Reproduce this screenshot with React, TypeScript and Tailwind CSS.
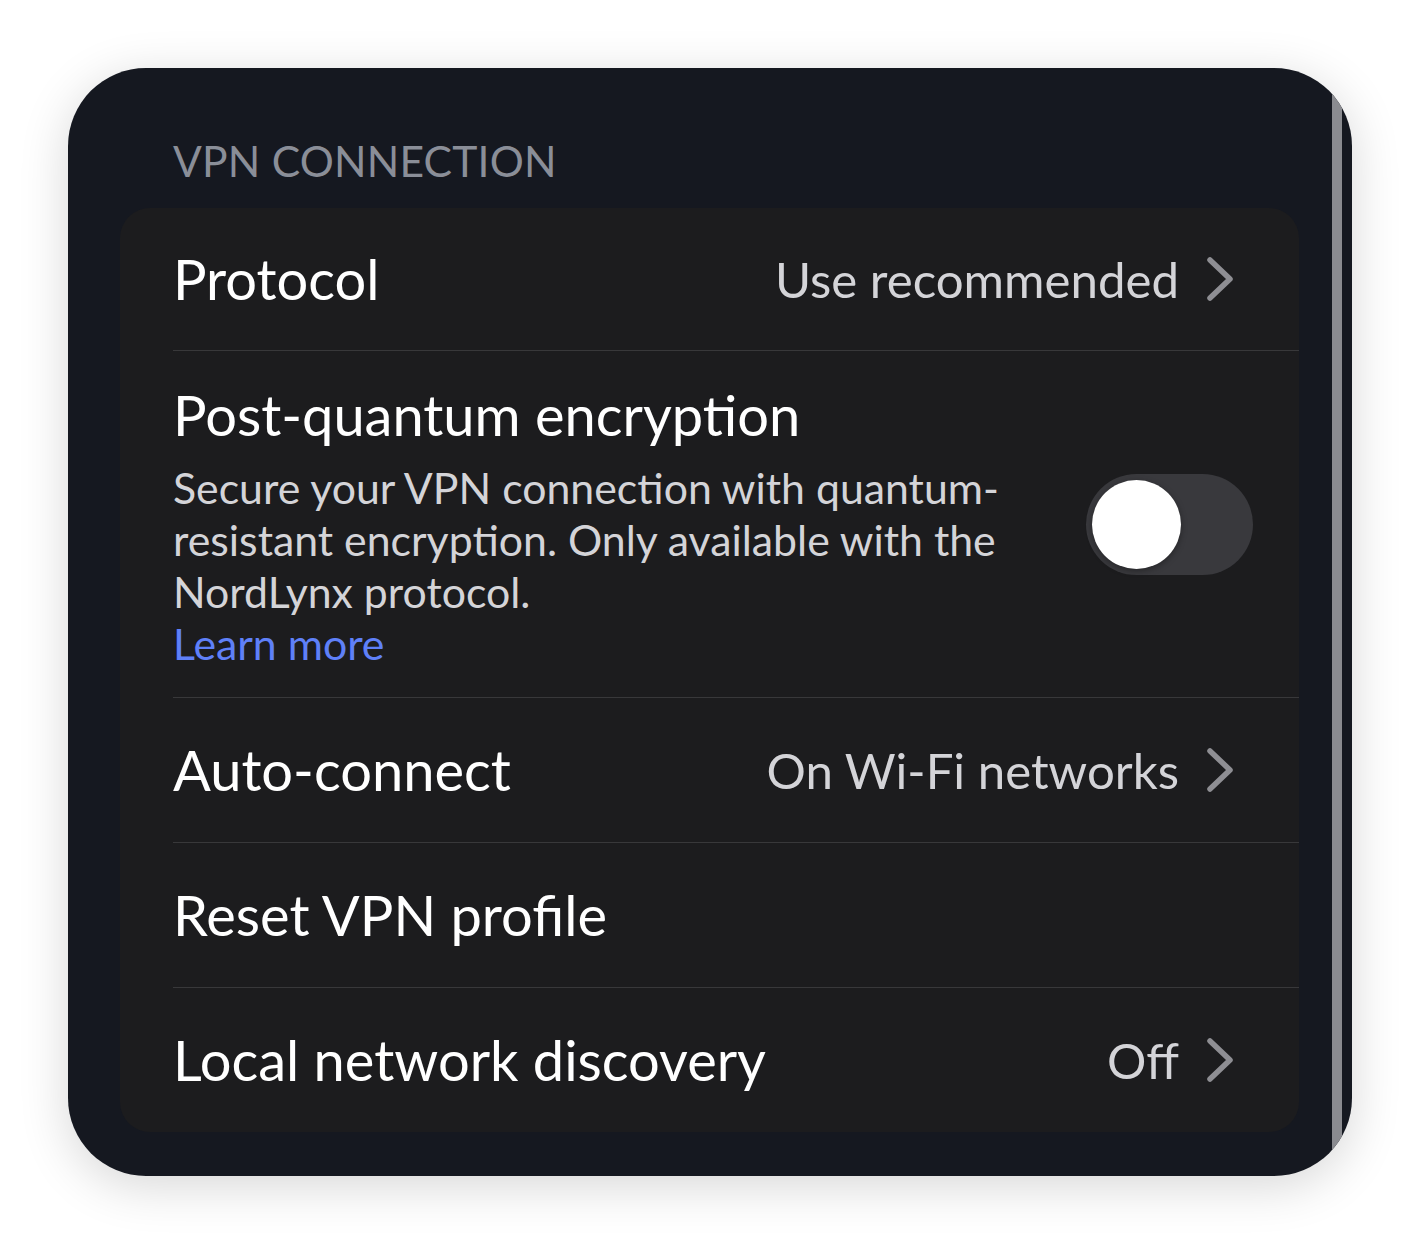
import React from "react";

function Chevron() {
    return (
        <svg width="32" height="48" viewBox="0 0 32 48" fill="none" className="shrink-0">
            <path d="M6 5 L26 24 L6 43" stroke="#8e8e93" strokeWidth={5.5} strokeLinecap="round" strokeLinejoin="round" />
        </svg>
    );
}

function Toggle() {
    return (
        <div className="w-[167px] h-[101px] rounded-full bg-[#39393d] flex items-center shrink-0">
            <div className="w-[89px] h-[89px] ml-[6px] rounded-full bg-white shadow-[0_2px_6px_rgba(0,0,0,0.35)]" />
        </div>
    );
}

function LinkRow({ title, value, last, height }: { title: string; value?: string; last?: boolean; height: string }) {
    return (
        <div className={`ml-[53px] flex items-center justify-between pr-[63px] ${height} ${last ? "" : "border-b border-[#38383a]"}`}>
            <span className="text-[56px] leading-[62px] text-white">{title}</span>
            {value !== undefined && (
                <div className="flex items-center gap-[25px]">
                    <span className="text-[49.2px] leading-[58px] text-[#d4d4d8]">{value}</span>
                    <Chevron />
                </div>
            )}
        </div>
    );
}

export default function App() {
    return (
        <div className="w-[1420px] h-[1244px] bg-white p-[68px] font-['Lato',sans-serif]">
            <div className="w-full h-full rounded-[78px] bg-[#151820] overflow-hidden flex shadow-[0_10px_50px_rgba(0,0,0,0.16)]">
                <div className="pl-[52px] flex flex-col">
                    {/* Section header */}
                    <div className="h-[140px] pt-[69px] pl-[53px]">
                        <span className="text-[42.6px] leading-[48px] text-[#8a8e98] tracking-[0.2px]">VPN CONNECTION</span>
                    </div>

                    {/* Settings card */}
                    <div className="w-[1179px] rounded-[30px] bg-[#1c1c1e] flex flex-col">
                        <LinkRow title="Protocol" value="Use recommended" height="h-[143px]" />

                        <div className="ml-[53px] h-[347px] border-b border-[#38383a] flex items-center justify-between pr-[46px]">
                            <div className="flex flex-col pt-[33px] self-start">
                                <span className="text-[56px] leading-[62px] text-white">Post-quantum encryption</span>
                                <p className="mt-[16px] w-[885px] text-[42.8px] leading-[52px] text-[#d4d4d8]">
                                    Secure your VPN connection with quantum-resistant encryption. Only available with the NordLynx protocol.
                                    <br />
                                    <span className="text-[#5f80f8]">Learn more</span>
                                </p>
                            </div>
                            <Toggle />
                        </div>

                        <LinkRow title="Auto-connect" value="On Wi-Fi networks" height="h-[145px]" />
                        <LinkRow title="Reset VPN profile" height="h-[145px]" />
                        <LinkRow title="Local network discovery" value="Off" height="h-[144px]" last />
                    </div>
                </div>

                {/* Scrollbar */}
                <div className="ml-[33px] w-[10px] bg-[#8a8b90] self-stretch" />
            </div>
        </div>
    );
}
